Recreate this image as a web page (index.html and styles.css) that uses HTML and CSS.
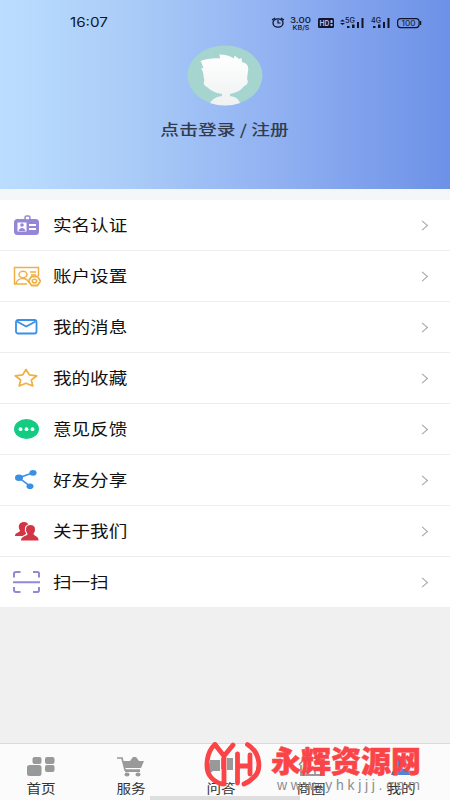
FILE: index.html
```html
<!DOCTYPE html>
<html lang="zh-CN">
<head>
<meta charset="utf-8">
<title>我的</title>
<link rel="stylesheet" href="styles.css">
</head>
<body>
<div class="app">
  <header class="hero">
    <div class="status">
      <span class="time">16:07</span>
      <svg class="status-icons" width="152" height="20" viewBox="0 0 152 20" fill="none" stroke="#10152b">
        <ellipse cx="8" cy="11" rx="5" ry="4.2" stroke-width="1.3"/><path d="M8 8v3h2.5M2 8l3-2M14 8l-3-2" stroke-width="1.2"/>
        <g fill="#10152b" stroke="none" font-family="Inter, sans-serif" font-weight="500">
          <text x="20" y="11" font-size="8" textLength="21" lengthAdjust="spacingAndGlyphs">3.00</text>
          <text x="22.500" y="17.500" font-size="6.500" textLength="17" lengthAdjust="spacingAndGlyphs">KB/S</text>
          <rect x="48" y="6" width="16" height="10" rx="1.500"/>
          <text x="49.500" y="13.800" font-size="7.500" font-weight="700" fill="#a9bdf5" textLength="10" lengthAdjust="spacingAndGlyphs">HD</text>
          <path d="M60.500 8h2v3h-2zM60.500 12h2v2h-2z" fill="#a9bdf5"/>
          <path d="M70 9.500l2.500-2 2.500 2zM70 11l2.500 2 2.500-2z"/>
          <text x="75" y="10.500" font-size="7" textLength="10" lengthAdjust="spacingAndGlyphs">5G</text>
          <path d="M77 14h2.500v2H77zM82 12.500h2.500V16H82zM87 10h2v6h-2zM91.500 6h2v10h-2z"/>
          <text x="101" y="10.500" font-size="7" textLength="10" lengthAdjust="spacingAndGlyphs">4G</text>
          <path d="M103 14h2.500v2H103zM108 12.500h2.500V16H108zM113 10h2v6h-2zM117.500 6h2v10h-2z"/>
          <text x="131.500" y="13.700" font-size="7.500" font-weight="400" textLength="14" lengthAdjust="spacingAndGlyphs">100</text>
        </g>
        <rect x="127.600" y="6.600" width="21.500" height="9" rx="3" stroke-width="1.200"/><path d="M150.500 9v4" stroke-width="1.500"/>
      </svg>
    </div>
    <svg class="avatar" width="76" height="61" viewBox="0 0 76 61">
      <defs><clipPath id="disc"><ellipse cx="38" cy="30.500" rx="37.500" ry="30"/></clipPath>
      <linearGradient id="face" x2="0" y2="1"><stop offset="0" stop-color="#fff"/><stop offset="1" stop-color="#eef0f1"/></linearGradient></defs>
      <ellipse cx="38" cy="30.500" rx="37.500" ry="30" fill="#a5d5ce"/>
      <g clip-path="url(#disc)"><path d="M13.500 16C19 14 26 13 33 13.500L32.500 9.500C38 9.500 43 11 47 13.500L47.500 10.500L52 14L54.500 13L55 17C60 18 62 21 61 26L60 34C62 36 60 41 57 41C54 46 48 48 43 49V51C50 52 53 55 54 62H22C23 55 28 52 35 51V49C28 48 23 45 20 42C17 41 16 38 17.500 35C16 31 17 27 14 23.500L16.500 23C15 20 15 18 13.500 16Z" fill="url(#face)"/></g>
    </svg>
    <div class="login">点击登录 / 注册</div>
  </header>
  <main class="menu">
    <a class="row"><svg class="icon" viewBox="0 0 28 24"><rect x="1" y="6" width="25" height="16" rx="3.500" fill="#9686d8"/><rect x="4.500" y="9.500" width="9" height="9" fill="#fff"/><circle cx="9" cy="12" r="1.800" fill="#9686d8"/><path d="M5.500 18c1-4 6-4 7 0z" fill="#9686d8"/><path d="M16 12h7M16 16h7" stroke="#fff" stroke-width="2"/><rect x="12" y="3" width="5" height="4" rx="1.500" fill="#fff" stroke="#9686d8" stroke-width="1.500"/></svg><span class="label">实名认证</span><i class="arrow"></i></a>
    <a class="row"><svg class="icon" viewBox="0 0 28 24" fill="none" stroke="#f0b044" stroke-width="1.500"><path d="M14 20H1.500V3.500h24V12M3 20c1-7 11-7 13-1M17 8h6M18 11h5"/><ellipse cx="10" cy="10.500" rx="4" ry="3.200"/><path d="M18.500 12.500h6l3 4.500-3 4.500h-6l-3-4.500z" fill="#fff" stroke-width="1.800" stroke-linejoin="round"/><ellipse cx="21.500" cy="17" rx="2.200" ry="1.800"/></svg><span class="label">账户设置</span><i class="arrow"></i></a>
    <a class="row"><svg class="icon" viewBox="0 0 28 24" fill="none" stroke="#3a90e5" stroke-width="1.800"><rect x="3" y="5" width="20.500" height="13.500" rx="2"/><path d="M4 6.500l9.200 5L22.500 6.500"/></svg><span class="label">我的消息</span><i class="arrow"></i></a>
    <a class="row"><svg class="icon" viewBox="0 0 28 24" fill="none" stroke="#f0b044" stroke-width="1.700" stroke-linejoin="round"><path d="M13 3.500l3.300 5.300 7.500 1-5.500 4.200 1.500 6L13 17.200 6.200 20l1.500-6-5.500-4.200 7.500-1z"/></svg><span class="label">我的收藏</span><i class="arrow"></i></a>
    <a class="row"><svg class="icon" viewBox="0 0 28 24"><ellipse cx="13.500" cy="12" rx="12.500" ry="10" fill="#13cc81"/><g fill="#fff"><circle cx="7.500" cy="12.200" r="1.900"/><circle cx="13.500" cy="12.200" r="1.900"/><circle cx="19.500" cy="12.200" r="1.900"/></g></svg><span class="label">意见反馈</span><i class="arrow"></i></a>
    <a class="row"><svg class="icon" viewBox="0 0 28 24"><path d="M20 4.800L6 9.800 17 18.200" fill="none" stroke="#3a90e5" stroke-width="1.600"/><g fill="#3a90e5"><ellipse cx="20" cy="4.800" rx="3.600" ry="2.900"/><ellipse cx="6" cy="9.800" rx="4" ry="3.300"/><ellipse cx="17" cy="18.200" rx="3.500" ry="2.800"/></g></svg><span class="label">好友分享</span><i class="arrow"></i></a>
    <a class="row"><svg class="icon" viewBox="0 0 28 24" fill="#d23543"><path d="M2 17c0-4 5-3 5-5.500-2-3-2-8.500 4-8.500 5 0 5 4 4 7v7z"/><path d="M7.500 22c-1-5 4-4.500 6.500-7-3-4-2-9.500 3.500-9.500S24 11 21 15c2 2.500 6 2 5 7z" stroke="#fff" stroke-width="1.200"/></svg><span class="label">关于我们</span><i class="arrow"></i></a>
    <a class="row"><svg class="icon" viewBox="0 0 28 24" fill="none" stroke="#9686d8" stroke-width="2"><path d="M1 7.500V3.500Q1 2 3 2H7.500M20 2h4.500Q26 2 26 3.500V7.500M1 17v3q0 2 2 2H7.500M20 22h4.500Q26 22 26 20V17M0 12.200h27"/></svg><span class="label">扫一扫</span><i class="arrow"></i></a>
  </main>
  <nav class="tabs">
    <a class="tab tab-first"><svg class="tab-icon" viewBox="0 0 30 24" fill="#999"><rect x="6.500" y="2" width="9" height="7" rx="2"/><rect x="19" y="2" width="9.500" height="7" rx="2"/><rect x="1" y="10" width="14.500" height="11" rx="2.500"/><rect x="19" y="10" width="9.500" height="7" rx="2"/></svg><span>首页</span></a>
    <a class="tab"><svg class="tab-icon" viewBox="0 0 30 24" fill="#999"><path d="M1 3h5l3 12h15" fill="none" stroke="#999" stroke-width="1.700"/><path d="M7 6h7l3-4h3l3 4h5l-3 7H9z"/><path d="M9 15h15v2H9z"/><ellipse cx="11" cy="19.500" rx="2.500" ry="1.900"/><ellipse cx="22" cy="19.500" rx="2.500" ry="1.900"/></svg><span>服务</span></a>
    <a class="tab"><svg class="tab-icon" viewBox="0 0 30 24" fill="#999"><path d="M4 5h10v11H7l-4 3v-3H2V8h2zM15 3h5v11h-5zM21 3h6v12h-6z"/></svg><span>问答</span></a>
    <a class="tab"><svg class="tab-icon" viewBox="0 0 30 24" fill="none" stroke="#999" stroke-width="1.800"><path d="M3 10l6-7h12l6 7M5 10v10h20V10M11 20v-7h8v7"/></svg><span>商圈</span></a>
    <a class="tab"><svg class="tab-icon" viewBox="0 0 30 24" fill="#5182dc"><ellipse cx="15" cy="7" rx="5.500" ry="5.500"/><path d="M5 20c1-5 5-7 9-7s9 2 10 7z"/></svg><span>我的</span></a>
  </nav>
  <div class="home-bar"></div>
  <div class="watermark">
    <svg class="mark" width="58" height="50" viewBox="0 0 58 50" fill="none" stroke="#fa4447" stroke-width="4.800" stroke-linecap="round" stroke-linejoin="round"><path d="M11 4.500C2 12 1 29 6 36Q10 42 18 44"/><path d="M11 4.500L20 16 29 5M20 16V44"/><path d="M33.500 14V43M33.500 26H46M46 15V34"/><path d="M43.500 4.500C57 13 58 31 49 38Q45 42 40 44"/></svg>
    <div class="brand"><div class="brand-name">永辉资源网</div><div class="brand-url">www.yhkjjj.com</div></div>
  </div>
</div>
</body>
</html>
```
FILE: styles.css
```css
* { box-sizing: border-box; }
body { margin: 0; font-family: "Noto Sans CJK SC", sans-serif; }
.app { position: relative; width: 450px; height: 800px; overflow: hidden; display: flex; flex-direction: column; background: #f0f0f0; }
.hero { height: 189px; flex: none; display: flex; flex-direction: column; align-items: center; background: linear-gradient(90deg, #bbdeff 0%, #a9cbf7 30%, #92b2f2 60%, #6d91e7 100%); }
.status { width: 100%; height: 45px; padding: 12px 28px 0 70px; display: flex; justify-content: space-between; }
.time { font: 400 13px/21px Inter, sans-serif; color: #10152b; transform: scaleX(1.17); transform-origin: left; }
.avatar { flex: none; }
.login { margin-top: 11px; font-size: 14.5px; line-height: 24px; font-weight: 500; color: #333c4d; white-space: nowrap; transform: scaleX(1.295); }
.menu { margin-top: 11px; height: 407px; flex: none; background: #fff; box-shadow: 0 -11px 0 #f3f7f7; }
.row { height: 51px; padding: 0 21px 0 13px; display: flex; align-items: center; border-bottom: 1px solid #ededed; }
.row:last-child { height: 50px; border-bottom: 0; }
.icon { width: 28px; height: 24px; flex: none; }
.label { margin-left: 12px; padding-bottom: 2px; font-size: 16px; line-height: 24px; color: #111; transform: scaleX(1.16); transform-origin: left; }
.arrow { margin-left: auto; margin-right: 3px; width: 7px; height: 7px; border: solid #aaa; border-width: 1px 1px 0 0; transform: scaleX(1.15) rotate(45deg); }
.tabs { margin-top: auto; height: 57px; border-top: 1px solid #d9d9d9; background: #fbfbfb; display: grid; grid-template-columns: 86px repeat(4, 90px); flex: none; }
.tab { display: flex; flex-direction: column; align-items: center; padding-top: 11px; font-size: 13px; line-height: 18px; color: #333; }
.tab-first { padding-right: 4px; }
.tab-icon { width: 30px; height: 24px; flex: none; }
.tab span { transform: scaleX(1.12); }
.home-bar { position: absolute; left: 150px; bottom: 0; width: 150px; height: 4px; background: #dedede; }
.watermark { position: absolute; left: 204px; top: 740px; display: flex; }
.mark { flex: none; }
.brand { margin-left: 9px; margin-top: -1px; }
.brand-name { font-size: 30px; line-height: 40px; height: 37px; font-weight: 900; color: #fa4447; white-space: nowrap; -webkit-text-stroke: 0.5px #fa4447; }
.brand-url { margin-left: 6px; font: 14px/18px "Liberation Sans", sans-serif; letter-spacing: 3.7px; color: #8d8d8d; white-space: nowrap; }
```
